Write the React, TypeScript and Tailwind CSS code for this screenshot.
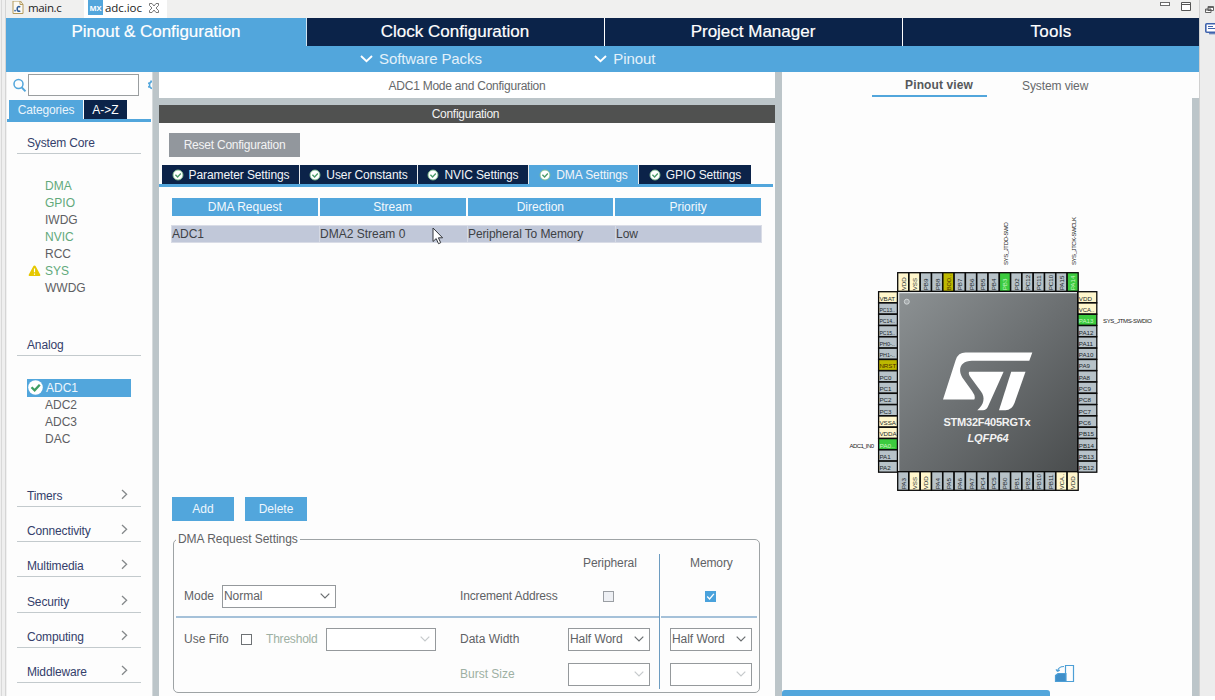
import React from "react";

type Kind = "io" | "power" | "reset" | "used";
type Pin = { name: string; kind: Kind };

const FILL: Record<Kind, string> = {
  io: "#b7c2c8",
  power: "#fff6cc",
  reset: "#bdb800",
  used: "#3ccb3f",
};

const parse = (list: string): Pin[] =>
  list.split(" ").map((entry) => {
    const [name, flag] = entry.split(":");
    const kind: Kind = flag === "p" ? "power" : flag === "r" ? "reset" : flag === "u" ? "used" : "io";
    return { name, kind };
  });

const TOP = parse("VDD:p VSS:p PB9 PB8 BOO..:r PB7 PB6 PB5 PB4 PB3:u PD2 PC12 PC11 PC10 PA15 PA14:u");
const LEFT = parse("VBAT:p PC13.. PC14.. PC15.. PH0-.. PH1-.. NRST:r PC0 PC1 PC2 PC3 VSSA:p VDDA:p PA0..:u PA1 PA2");
const RIGHT = parse("VDD:p VCA..:p PA13:u PA12 PA11 PA10 PA9 PA8 PC9 PC8 PC7 PC6 PB15 PB14 PB13 PB12");
const BOTTOM = parse("PA3 VSS:p VDD:p PA4 PA5 PA6 PA7 PC4 PC5 PB0 PB1 PB2 PB10 PB11 VCA..:p VDD:p");

const STEP = 11.3;

const inkOf = (kind: Kind) => (kind === "used" ? "#c9f5c4" : kind === "reset" ? "#4a2c00" : "#20262a");
const lengthOf = (name: string) => (name.length > 4 ? 15.5 : undefined);

function ColumnPin({ pin, x, y }: { pin: Pin; x: number; y: number }) {
  return (
    <g>
      <rect x={x + 0.7} y={y + 0.7} width={STEP - 0.3} height="18.6" fill={FILL[pin.kind]} stroke="#0a0a0a" strokeWidth="1.300" />
      <text transform={`translate(${x + 8.7} ${y + 18.3}) rotate(-90)`} fontSize="6.200" textLength={lengthOf(pin.name)} lengthAdjust="spacingAndGlyphs" fill={inkOf(pin.kind)}>
        {pin.name}
      </text>
    </g>
  );
}

function RowPin({ pin, x, y }: { pin: Pin; x: number; y: number }) {
  return (
    <g>
      <rect x={x} y={y + 0.7} width="18.800" height={STEP - 0.3} fill={FILL[pin.kind]} stroke="#0a0a0a" strokeWidth="1.300" />
      <text x={x + 0.8} y={y + 9.6} fontSize="6.200" textLength={lengthOf(pin.name)} lengthAdjust="spacingAndGlyphs" fill={inkOf(pin.kind)}>
        {pin.name}
      </text>
    </g>
  );
}

function Chip() {
  return (
    <svg width="410" height="618" viewBox="782 72 410 618" className="block" fontFamily="Liberation Sans, sans-serif">
      <defs>
        <linearGradient id="body" x1="0" y1="0" x2="1" y2="1">
          <stop offset="0" stopColor="#8d9294" />
          <stop offset="0.500" stopColor="#6b6f71" />
          <stop offset="1" stopColor="#4a4d4e" />
        </linearGradient>
      </defs>
      {TOP.map((p, i) => <ColumnPin key={i} pin={p} x={897 + i * STEP} y={272} />)}
      {BOTTOM.map((p, i) => <ColumnPin key={i} pin={p} x={897 + i * STEP} y={471} />)}
      {LEFT.map((p, i) => <RowPin key={i} pin={p} x={878.6} y={291 + i * STEP} />)}
      {RIGHT.map((p, i) => <RowPin key={i} pin={p} x={1078} y={291 + i * STEP} />)}
      <rect x="897.500" y="291.500" width="180" height="180" fill="url(#body)" stroke="#0a0a0a" />
      <path d="M898.700 471V292.600H1077" fill="none" stroke="#dfe3e4" strokeWidth="1.200" />
      <circle cx="906.800" cy="301.700" r="2.500" fill="#a3a8aa" stroke="#d4d8d9" strokeWidth="0.900" />
      <g fill="#fff">
        <path d="M943 399.5L955.7 360Q958.2 352.6 965.5 352.6H1032.3L1029.3 360.8H972C961 360.8 957.3 369 962.3 377.5L972 391Q976 396.5 974.3 399.5Z" />
        <path d="M969.3 371.7H1003.6L988 406.5Q986.3 410.3 983 410.3H977.3C984 404.5 985.5 397.5 981 391.5L970 376.5Q968 373.2 969.3 371.7Z" />
        <path d="M1011.2 371.7H1025.5L1014.5 403Q1011.8 410.3 1005.5 410.3H999Z" />
      </g>
      <text x="987" y="426" textAnchor="middle" fontSize="11" fontWeight="bold" fill="#f2f2f2" textLength="87">STM32F405RGTx</text>
      <text x="988" y="441.500" textAnchor="middle" fontSize="11" fontWeight="bold" fontStyle="italic" fill="#f2f2f2" textLength="41">LQFP64</text>
      <g fontSize="6" fill="#222">
        <text transform="translate(1008.300 265) rotate(-90)" textLength="43">SYS_JTDO-SWO</text>
        <text transform="translate(1076 265) rotate(-90)" textLength="48">SYS_JTCK-SWCLK</text>
        <text x="1103" y="323" textLength="49">SYS_JTMS-SWDIO</text>
        <text x="849.500" y="447.500" textLength="24.500">ADC1_IN0</text>
      </g>
      <g fill="none" stroke="#4d9fd6" strokeWidth="1.200">
        <path d="M1065.500 673V665.500H1073.500V681.500H1066" />
        <path d="M1055.500 675.500L1058 673.500H1066V681.500H1055.500Z" fill="#3f8fc9" />
        <path d="M1057.500 671.500C1058 668 1060.500 666.500 1064 666.500M1057.500 671.500L1056 669.300M1057.500 671.500L1059.800 670.100" />
      </g>
    </svg>
  );
}

function Check({ size, className = "" }: { size: number; className?: string }) {
  return (
    <svg width={size} height={size} viewBox="0 0 14 14" className={className}>
      <circle cx="7" cy="7" r="6.800" fill="#fff" />
      <path d="M3.300 6.800L6.200 9.700L11 4.500" fill="none" stroke="#3f9e63" strokeWidth="2.200" />
    </svg>
  );
}

function TabCheck() {
  return (
    <svg width="12" height="12" viewBox="0 0 12 12" className="shrink-0">
      <circle cx="6" cy="6" r="5" fill="#fff" stroke="#7fc08d" strokeWidth="0.900" />
      <path d="M3.400 5.700L5.600 7.900L8.800 4.600" fill="none" stroke="#4b9b68" strokeWidth="1.400" />
    </svg>
  );
}

function Chevron({ light = false }: { light?: boolean }) {
  return (
    <svg width="10" height="6" viewBox="0 0 10 6">
      <path d="M0.700 0.700L5 5L9.300 0.700" fill="none" stroke={light ? "#c6cacc" : "#6a6e70"} strokeWidth="1.200" />
    </svg>
  );
}

function Select({ value = "", off = false, className }: { value?: string; off?: boolean; className: string }) {
  return (
    <div className={`flex h-[23px] items-center justify-between border border-[#95999c] bg-white pl-px pr-[5px] ${className}`}>
      <span className="tracking-[-0.05px]">{value}</span>
      <Chevron light={off} />
    </div>
  );
}

function MenuHead({ label, open = false }: { label: string; open?: boolean }) {
  return (
    <div className="ml-[10px] flex h-[23px] w-[124px] items-center justify-between border-b border-[#c3cacd] pl-[10px] pr-[13px] pt-[2px] text-[#34406b]">
      <span className="tracking-[-0.15px]">{label}</span>
      {!open && (
        <svg width="7" height="11" viewBox="0 0 7 11" className="mb-[3px]">
          <path d="M1 1L5.600 5.300L1 9.700" fill="none" stroke="#85898b" strokeWidth="1.300" />
        </svg>
      )}
    </div>
  );
}

const CORE = [
  ["DMA", true], ["GPIO", true], ["IWDG", false], ["NVIC", true], ["RCC", false], ["SYS", true], ["WWDG", false],
] as const;

function Sidebar() {
  return (
    <aside className="flex w-[146px] shrink-0 flex-col overflow-hidden border-l border-[#f0f0f0] bg-[#fdfdfd]">
      <div className="flex h-[28px] shrink-0 items-start pl-[5px] pt-[2px]">
        <svg width="15" height="15" viewBox="0 0 15 15" className="mt-[4px]">
          <circle cx="6.500" cy="6" r="4.500" fill="none" stroke="#52a6dc" strokeWidth="1.500" />
          <path d="M9.800 9.500L13.500 13.300" stroke="#52a6dc" strokeWidth="1.900" />
        </svg>
        <div className="ml-px h-[22px] w-[111px] border border-[#9a9ea0] bg-white" />
        <svg width="4" height="14" viewBox="0 0 4 14" className="ml-[9px] mt-[4px]">
          <path d="M4 3.500Q1.500 4 1.500 7T4 10.500M0 5L2 6M0 9L2 8M3 2.500V4" fill="none" stroke="#52a6dc" strokeWidth="1.500" />
        </svg>
      </div>
      <div className="mr-px flex h-[22px] shrink-0 border-b-[3px] border-[#52a6dc] pl-[2px] text-white">
        <div className="flex w-[75px] items-center justify-center border-r border-white bg-[#52a6dc] tracking-[-0.150px] text-[#eaf4fb]">Categories</div>
        <div className="flex w-[43px] items-center justify-center bg-[#0b2349]">A-&gt;Z</div>
      </div>
      <div className="pt-[9px]"><MenuHead label="System Core" open /></div>
      <ul className="pl-[20px] pt-[23px] text-[#5d6063]">
        {CORE.map(([name, on]) => (
          <li key={name} className={`flex h-[17.100px] items-center ${on ? "text-[#62a97b]" : ""}`}>
            <span className="flex w-[18px] justify-start">
              {name === "SYS" && (
                <svg width="13" height="12" viewBox="0 0 13 12" className="ml-[1px]">
                  <path d="M6.500 0.500Q7.300 0.500 7.700 1.300L12.300 9.800Q12.600 11 11.500 11H1.500Q0.400 11 0.700 9.800L5.300 1.300Q5.700 0.500 6.500 0.500Z" fill="#e6c800" />
                  <path d="M6.500 3.500V7.300M6.500 8.500V9.800" stroke="#fff" strokeWidth="1.200" />
                </svg>
              )}
            </span>
            {name}
          </li>
        ))}
      </ul>
      <div className="pt-[36px]"><MenuHead label="Analog" open /></div>
      <ul className="pl-[20px] pt-[23px] text-[#5d6063]">
        <li className="flex h-[18px] w-[104px] items-center bg-[#52a6dc] text-[#eef6fc]">
          <Check size={15} className="ml-px mr-[3px]" />ADC1
        </li>
        {["ADC2", "ADC3", "DAC"].map((n) => (
          <li key={n} className="flex h-[17.100px] items-center pl-[18px]">{n}</li>
        ))}
      </ul>
      <div className="flex flex-col gap-[12.200px] pt-[36px]">
        {["Timers", "Connectivity", "Multimedia", "Security", "Computing", "Middleware"].map((n) => (
          <MenuHead key={n} label={n} />
        ))}
      </div>
    </aside>
  );
}

const TABS = [
  ["Parameter Settings", "w-[138px]"],
  ["User Constants", "w-[118px]"],
  ["NVIC Settings", "w-[111px]"],
  ["DMA Settings", "w-[110px]"],
  ["GPIO Settings", "w-[112px]"],
] as const;

function RequestSettings() {
  return (
    <section className="relative ml-[14px] mr-[15px] mt-[18px] h-[154px] rounded-[5px] border border-[#9ea3a5] text-[#5f6265]">
      <span className="absolute left-[2px] top-[-8px] bg-[#fdfdfd] px-[2px] tracking-[-0.050px]">DMA Request Settings</span>
      <div className="grid h-full grid-cols-[484px_1fr] px-[2px]">
        <div className="mt-[14px] mb-[5px] flex flex-col border-r border-[#6d9cc0]">
          <div className="flex h-[18px] items-start pl-[407px] pt-[2px] tracking-[-0.100px]">Peripheral</div>
          <div className="flex h-[46px] items-center border-b-2 border-[#a5c1d9] pl-[8px] pt-[4px]">
            <span className="w-[38px]">Mode</span>
            <Select value="Normal" className="w-[114px]" />
            <span className="ml-[124px] w-[143px] tracking-[-0.150px]">Increment Address</span>
            <span className="h-[11px] w-[11px] border border-[#9a9ea3] bg-[#eef0f4]" />
          </div>
          <div className="flex h-[41px] items-center pl-[8px] pt-px">
            <span className="w-[57px]">Use Fifo</span>
            <span className="h-[11px] w-[11px] border border-[#6e7275] bg-white" />
            <span className="ml-[14px] w-[60px] tracking-[-0.200px] text-[#9db0a3]">Threshold</span>
            <Select off className="w-[110px]" />
            <span className="ml-[24px] w-[108px]">Data Width</span>
            <Select value="Half Word" className="w-[82px]" />
          </div>
          <div className="flex h-[30px] items-center pl-[284px]">
            <span className="w-[108px] text-[#9db0a3]">Burst Size</span>
            <Select off className="w-[82px]" />
          </div>
        </div>
        <div className="mt-[14px] mb-[5px] flex flex-col">
          <div className="flex h-[18px] items-start pl-[30px] pt-[2px] tracking-[-0.100px]">Memory</div>
          <div className="ml-px flex h-[46px] items-center border-b-2 border-[#a5c1d9] pl-[44px] pt-[4px]">
            <svg width="11" height="11" viewBox="0 0 11 11">
              <rect width="11" height="11" fill="#4aa2dc" />
              <path d="M2.200 5.500L4.600 8L8.900 2.800" fill="none" stroke="#fff" strokeWidth="1.300" />
            </svg>
          </div>
          <div className="flex h-[41px] items-center pl-[10px] pt-px"><Select value="Half Word" className="w-[82px] shrink-0" /></div>
          <div className="flex h-[30px] items-center pl-[10px]"><Select off className="w-[82px] shrink-0" /></div>
        </div>
      </div>
    </section>
  );
}

function Center() {
  return (
    <main className="relative flex w-[616px] shrink-0 flex-col bg-[#bcc5c9]">
      <div className="flex h-[26px] items-center justify-center bg-white pt-px text-[#66696b] tracking-[-0.240px]">ADC1 Mode and Configuration</div>
      <div className="mt-[7px] flex h-[18px] items-center justify-center bg-[#505150] pr-[3px] text-[#f2f2f2] tracking-[-0.300px]">Configuration</div>
      <div className="flex flex-1 flex-col bg-[#fdfdfd]">
        <div className="ml-[10px] mt-[10px] flex h-[24px] w-[131px] items-center justify-center bg-[#92979d] text-[#f2f3f4] tracking-[-0.230px]">Reset Configuration</div>
        <div className="mr-[2px] mt-[8px] flex h-[22px] border-b-[3px] border-[#52a6dc] pl-[3px] text-[#f2f5f9]">
          {TABS.map(([name, w], i) => (
            <div
              key={name}
              className={`flex items-center justify-center gap-[5px] tracking-[-0.100px] ${w} ${i < 4 ? "border-r border-[#e8eaec]" : ""} ${i === 3 ? "bg-[#52a6dc]" : "bg-[#0b2349]"}`}
            >
              <TabCheck />
              {name}
            </div>
          ))}
        </div>
        <div className="ml-[13px] mt-[11px] grid w-[589px] grid-cols-4 gap-[2px] text-[#f4f9fd]">
          {["DMA Request", "Stream", "Direction", "Priority"].map((h) => (
            <div key={h} className="flex h-[18px] items-center justify-center bg-[#52a6dc]">{h}</div>
          ))}
        </div>
        <div className="ml-[12px] mt-[9px] grid w-[591px] grid-cols-[148px_148px_148px_145px] border border-[#d9dce6] bg-[#c1c8d9] text-[#3d4145]">
          {["ADC1", "DMA2 Stream 0", "Peripheral To Memory", "Low"].map((h, i) => (
            <div key={h} className={`flex h-[16px] items-center ${i < 3 ? "border-r border-[#d5d9e4]" : ""} ${i === 2 ? "tracking-[-0.100px]" : ""}`}>{h}</div>
          ))}
        </div>
        <div className="ml-[13px] mt-[254px] flex gap-[11px] text-[#eef6fc]">
          <div className="flex h-[24px] w-[62px] items-center justify-center bg-[#52a6dc]">Add</div>
          <div className="flex h-[24px] w-[62px] items-center justify-center bg-[#52a6dc]">Delete</div>
        </div>
        <RequestSettings />
      </div>
      <svg width="12" height="18" viewBox="0 0 12 18" className="absolute left-[273px] top-[155px]">
        <path d="M1 1V14.500L4.200 11.600L6.500 16.700L8.700 15.700L6.400 10.800H10.600Z" fill="#fff" stroke="#33363c" strokeWidth="1" />
      </svg>
    </main>
  );
}

function PinoutPane() {
  return (
    <section className="relative flex w-[417px] flex-1 bg-[#fdfdfd]">
      <div className="w-[410px]"><Chip /></div>
      <div className="absolute left-[90px] top-0 flex h-[25px] w-[115px] items-center justify-center border-b-2 border-[#52a6dc] pl-[19px] pt-[3px] font-bold text-[#55585b] tracking-[0.100px]">Pinout view</div>
      <div className="absolute left-[240px] top-0 flex h-[25px] items-center pt-[2px] text-[#66696b] tracking-[-0.100px]">System view</div>
      <div className="mt-[26px] w-[7px] bg-[#bcc5c9]" />
      <div className="absolute bottom-0 left-0 h-[6px] w-[268px] rounded-t-[3px] bg-[#52a6dc]" />
    </section>
  );
}

export default function App() {
  return (
    <div className="h-[700px] w-[1215px] overflow-hidden bg-white font-['Liberation_Sans',Arial,sans-serif] text-[12px] leading-[14px]">
      <div className="flex h-[696px] bg-[#efefef]">
        <div className="flex w-[6px] shrink-0 justify-between pl-px">
          <div className="w-px bg-[#d9d9d9]" />
          <div className="w-px bg-[#d5d5d5]" />
        </div>
        <div className="flex w-[1193px] shrink-0 flex-col">
          <div className="flex h-[18px] shrink-0 bg-[#f0f0ef] font-['Open_Sans','Noto_Sans',sans-serif] text-[11.500px] text-[#1c1c1c]">
            <div className="flex w-[78px] items-center gap-[4px] pb-[3px] pl-[6px]">
              <svg width="12" height="14" viewBox="0 0 12 14">
                <path d="M1 0H8.500L11 3.500V12.500H1Z" fill="#fbfaf5" stroke="#b49a5c" strokeWidth="1" />
                <path d="M8 0V3.500H11" fill="none" stroke="#b49a5c" />
                <path d="M8.300 5.900Q5.200 4.700 5.200 8Q5.200 11 8.300 9.900" fill="none" stroke="#2d5c9b" strokeWidth="1.600" />
                <rect x="2.300" y="8.900" width="1.500" height="1.500" fill="#2d5c9b" />
              </svg>
              <span className="tracking-[-0.350px]">main.c</span>
            </div>
            <div className="flex w-[83px] items-center bg-white pb-[3px] pl-[4px]">
              <span className="mr-[2px] flex h-[15px] w-[15px] shrink-0 items-center justify-center bg-[#52a6dc] text-[7.500px] font-bold text-white">MX</span>
              <span className="tracking-[-0.050px]">adc.ioc</span>
              <svg width="10" height="10" viewBox="0 0 10 10" className="ml-[7px] shrink-0">
                <path d="M0.500 0.500H3L5 3L7 0.500H9.500V2.500L7 5L9.500 7.500V9.500H7L5 7L3 9.500H0.500V7.500L3 5L0.500 2.500Z" fill="#fff" stroke="#6b6b6b" strokeWidth="0.900" />
              </svg>
            </div>
            <div className="flex flex-1 items-start justify-end gap-[11px] pr-[8px]">
              <svg width="10" height="6" viewBox="0 0 10 6"><rect x="0.500" y="2.500" width="9" height="3" fill="#fff" stroke="#6b6b6b" /></svg>
              <svg width="10" height="12" viewBox="0 0 10 12"><path d="M0.500 2.500H9.500V10.500H0.500ZM0.500 4.500H9.500" fill="#fff" stroke="#555" /></svg>
            </div>
          </div>
          <nav className="grid h-[28px] shrink-0 grid-cols-[301px_298px_298px_296px] bg-[#0b2349] text-[17px] text-white [-webkit-text-stroke:0.200px_white]">
            <div className="flex items-center justify-center border-r border-[#cfe3f1] bg-[#52a6dc] tracking-[-0.050px]">Pinout &amp; Configuration</div>
            <div className="flex items-center justify-center border-r border-white pr-px">Clock Configuration</div>
            <div className="flex items-center justify-center border-r border-white pr-px">Project Manager</div>
            <div className="flex items-center justify-center tracking-[0.300px]">Tools</div>
          </nav>
          <div className="flex h-[26px] shrink-0 items-center bg-[#52a6dc] pl-[354px] text-[15px] text-[#e3f1fa]">
            {["Software Packs", "Pinout"].map((n, i) => (
              <div key={n} className={`flex items-center gap-[6px] ${i ? "ml-[112.500px]" : ""}`}>
                <svg width="13" height="8" viewBox="0 0 13 8"><path d="M1 1L6.500 6.300L12 1" fill="none" stroke="#fff" strokeWidth="1.900" /></svg>
                <span className="tracking-[-0.100px]">{n}</span>
              </div>
            ))}
          </div>
          <div className="flex min-h-0 flex-1">
            <Sidebar />
            <div className="w-[7px] shrink-0 border-l border-[#d5dadc] bg-[#bcc5c9]" />
            <Center />
            <div className="w-[7px] shrink-0 bg-[#bcc5c9]" />
            <PinoutPane />
          </div>
        </div>
        <div className="flex flex-1 flex-col items-end border-l border-[#d0d0d0] bg-[#ededed]">
          <svg width="9" height="9" viewBox="0 0 9 9" className="mr-px mt-[5px]">
            <path d="M3 1.500H8.500V5.500H3ZM3 2.500H8.500M0.500 4H6V7.500H0.500ZM0.500 5H6" fill="#fff" stroke="#555" strokeWidth="0.900" />
          </svg>
          <svg width="10" height="12" viewBox="0 0 10 12" className="mt-[9px]">
            <rect x="0.800" y="0.800" width="12" height="8.500" rx="1" fill="#fff" stroke="#3f63ad" strokeWidth="1.600" />
            <path d="M3 3.500H8M3 5.500H10M4 10.800H10" stroke="#3f63ad" strokeWidth="1.100" />
          </svg>
        </div>
      </div>
    </div>
  );
}
